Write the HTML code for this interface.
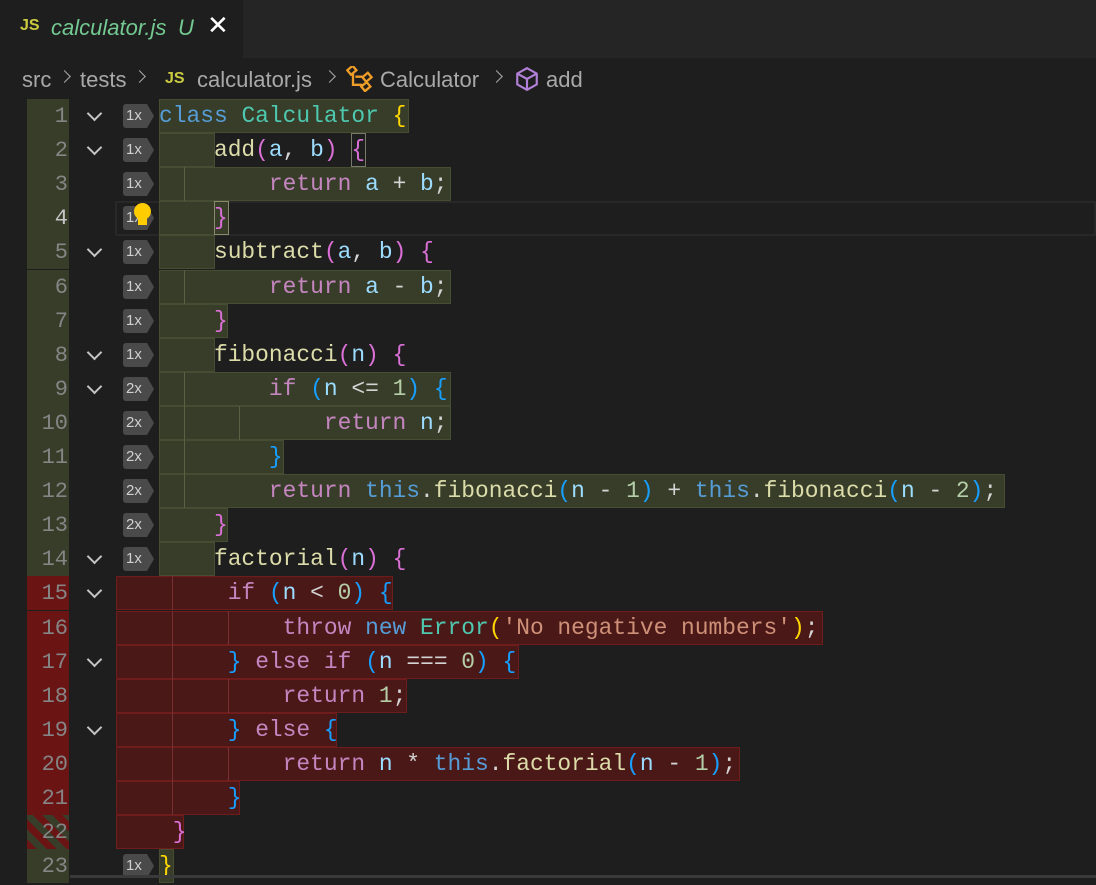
<!DOCTYPE html>
<html><head><meta charset="utf-8"><style>
*{margin:0;padding:0;box-sizing:border-box}
body{width:1096px;height:878px;background:#1e1e1e;overflow:hidden;position:relative;font-family:"Liberation Sans",sans-serif}
.tabbar{position:absolute;left:0;top:0;width:1096px;height:58px;background:#252526}
.tab{position:absolute;left:0;top:0;width:243px;height:58px;background:#1e1e1e}
.cr{position:absolute;top:67px;font-size:22px;color:#a9a9a9;white-space:nowrap}
.sep{position:absolute;top:72px;width:9px;height:9px;border-right:1.5px solid #a9a9a9;border-top:1.5px solid #a9a9a9;transform:rotate(45deg)}
.l{position:absolute;left:0;height:34px;width:1096px}
.n{position:absolute;left:27px;width:42px;height:34px;text-align:right;padding-right:1px;color:#858585;font-family:"Liberation Mono",monospace;font-size:22px;line-height:36px}
.g{background:#373d29}.r{background:#6b1414}
.b{position:absolute;height:34px}
.gb{background:#373d29;border:1px solid #454d33}
.rb{background:#4b1818;border:1px solid #6e1c1c}
.t{position:absolute;left:159px;top:0;line-height:34px;font-family:"Liberation Mono",monospace;font-size:22.9px;white-space:pre;color:#d4d4d4}
.ch{position:absolute;left:89px;top:9px;border-right:2px solid #c5c5c5;border-bottom:2px solid #c5c5c5;transform:rotate(45deg);width:11px;height:11px}
.bd{position:absolute;left:123px;top:5px;width:24px;height:24px;background:#4a4a4a;color:#d0d0d0;font-size:15px;line-height:24px;padding-left:3px;border-radius:3px 0 0 3px}
.bd:after{content:"";position:absolute;right:-7px;top:0;border-left:7px solid #4a4a4a;border-top:12px solid transparent;border-bottom:12px solid transparent}
.ig{position:absolute;top:0;width:1px;height:34px;background:#5a6040}
.igr{position:absolute;top:0;width:1px;height:34px;background:#7a3030}
.k{color:#569cd6}.c{color:#4ec9b0}.y{color:#ffd700}.f{color:#dcdcaa}.p{color:#da70d6}.v{color:#9cdcfe}.rt{color:#c586c0}.nu{color:#b5cea8}.s{color:#ce9178}.bl{color:#179fff}
</style></head><body>
<div class="tabbar"><div class="tab">
<span style="position:absolute;left:20px;top:17px;color:#cbcb41;font-weight:bold;font-size:16px">JS</span>
<span style="position:absolute;left:51px;top:15px;color:#73c991;font-style:italic;font-size:22px">calculator.js</span>
<span style="position:absolute;left:178px;top:15px;color:#73c991;font-style:italic;font-size:22px">U</span>
<span style="position:absolute;left:207px;top:10px;color:#fff;font-size:26px">✕</span>
</div></div>
<span class="cr" style="left:22px">src</span><div class="sep" style="left:60px"></div>
<span class="cr" style="left:80px">tests</span><div class="sep" style="left:135px"></div>
<b class="cr" style="left:165px;top:70px;font-size:16px;color:#cbcb41">JS</b>
<span class="cr" style="left:197px">calculator.js</span><div class="sep" style="left:325px"></div>
<svg style="position:absolute;left:346px;top:66px" width="28" height="26" viewBox="0 0 24 22"><g fill="none" stroke="#ee9d28" stroke-width="2"><rect x="2" y="1" width="6" height="5" transform="rotate(-40 5 3.5)"/><rect x="15" y="7" width="6" height="5" transform="rotate(-40 18 9.5)"/><rect x="14" y="15" width="6" height="5" transform="rotate(-40 17 17.5)"/><path d="M6 6v10h8M8 9h7"/></g></svg>
<span class="cr" style="left:380px">Calculator</span><div class="sep" style="left:492px"></div>
<svg style="position:absolute;left:514px;top:66px" width="26" height="26" viewBox="0 0 24 24"><g fill="none" stroke="#b180d7" stroke-width="2"><path d="M12 2l9 5v10l-9 5-9-5V7z"/><path d="M3 7l9 5 9-5M12 12v10"/></g></svg>
<span class="cr" style="left:546px">add</span>

<div style="position:absolute;left:115px;top:201px;width:981px;height:35px;border:2px solid #282828"></div>

<div class="l" style="top:99px"><div class="n g">1</div><div class="ch"></div><div class="bd">1x</div><div class="b gb" style="left:159px;width:250px"></div><div class="t"><span class="k">class</span> <span class="c">Calculator</span> <span class="y">{</span></div></div>
<div class="l" style="top:133.1px"><div class="n g">2</div><div class="ch"></div><div class="bd">1x</div><div class="b gb" style="left:159px;width:56px"></div><div class="b" style="left:351px;width:15px;border:1px solid #7a7a6a"></div><div class="t">    <span class="f">add</span><span class="p">(</span><span class="v">a</span>, <span class="v">b</span><span class="p">)</span> <span class="p">{</span></div></div>
<div class="l" style="top:167.2px"><div class="n g">3</div><div class="bd">1x</div><div class="b gb" style="left:159px;width:292px"></div><div class="ig" style="left:184px"></div><div class="t">        <span class="rt">return</span> <span class="v">a</span> + <span class="v">b</span>;</div></div>
<div class="l" style="top:201.3px"><div class="n g" style="color:#c6c6c6">4</div><div class="bd">1x</div><div class="b gb" style="left:159px;width:56px"></div><div class="b gb" style="left:214px;width:15px;border-color:#8a8a6a"></div><div class="t">    <span class="p">}</span></div><div style="position:absolute;left:134px;top:2px;width:17px;height:17px;border-radius:50%;background:#ffcc00"></div><div style="position:absolute;left:138px;top:16px;width:9px;height:8px;background:#ffcc00"></div></div>
<div class="l" style="top:235.4px"><div class="n g">5</div><div class="ch"></div><div class="bd">1x</div><div class="b gb" style="left:159px;width:56px"></div><div class="t">    <span class="f">subtract</span><span class="p">(</span><span class="v">a</span>, <span class="v">b</span><span class="p">)</span> <span class="p">{</span></div></div>
<div class="l" style="top:269.5px"><div class="n g">6</div><div class="bd">1x</div><div class="b gb" style="left:159px;width:292px"></div><div class="ig" style="left:184px"></div><div class="t">        <span class="rt">return</span> <span class="v">a</span> - <span class="v">b</span>;</div></div>
<div class="l" style="top:303.6px"><div class="n g">7</div><div class="bd">1x</div><div class="b gb" style="left:159px;width:69px"></div><div class="t">    <span class="p">}</span></div></div>
<div class="l" style="top:337.7px"><div class="n g">8</div><div class="ch"></div><div class="bd">1x</div><div class="b gb" style="left:159px;width:56px"></div><div class="t">    <span class="f">fibonacci</span><span class="p">(</span><span class="v">n</span><span class="p">)</span> <span class="p">{</span></div></div>
<div class="l" style="top:371.8px"><div class="n g">9</div><div class="ch"></div><div class="bd">2x</div><div class="b gb" style="left:159px;width:292px"></div><div class="ig" style="left:184px"></div><div class="t">        <span class="rt">if</span> <span class="bl">(</span><span class="v">n</span> &lt;= <span class="nu">1</span><span class="bl">)</span> <span class="bl">{</span></div></div>
<div class="l" style="top:405.9px"><div class="n g">10</div><div class="bd">2x</div><div class="b gb" style="left:159px;width:292px"></div><div class="ig" style="left:184px"></div><div class="ig" style="left:239px"></div><div class="t">            <span class="rt">return</span> <span class="v">n</span>;</div></div>
<div class="l" style="top:440px"><div class="n g">11</div><div class="bd">2x</div><div class="b gb" style="left:159px;width:125px"></div><div class="ig" style="left:184px"></div><div class="t">        <span class="bl">}</span></div></div>
<div class="l" style="top:474.1px"><div class="n g">12</div><div class="bd">2x</div><div class="b gb" style="left:159px;width:846px"></div><div class="ig" style="left:184px"></div><div class="t">        <span class="rt">return</span> <span class="k">this</span>.<span class="f">fibonacci</span><span class="bl">(</span><span class="v">n</span> - <span class="nu">1</span><span class="bl">)</span> + <span class="k">this</span>.<span class="f">fibonacci</span><span class="bl">(</span><span class="v">n</span> - <span class="nu">2</span><span class="bl">)</span>;</div></div>
<div class="l" style="top:508.2px"><div class="n g">13</div><div class="bd">2x</div><div class="b gb" style="left:159px;width:69px"></div><div class="t">    <span class="p">}</span></div></div>
<div class="l" style="top:542.3px"><div class="n g">14</div><div class="ch"></div><div class="bd">1x</div><div class="b gb" style="left:159px;width:56px"></div><div class="t">    <span class="f">factorial</span><span class="p">(</span><span class="v">n</span><span class="p">)</span> <span class="p">{</span></div></div>
<div class="l" style="top:576.4px"><div class="n r">15</div><div class="ch"></div><div class="b rb" style="left:116px;width:277px"></div><div class="igr" style="left:172px"></div><div class="t">     <span class="rt">if</span> <span class="bl">(</span><span class="v">n</span> &lt; <span class="nu">0</span><span class="bl">)</span> <span class="bl">{</span></div></div>
<div class="l" style="top:610.5px"><div class="n r">16</div><div class="b rb" style="left:116px;width:707px"></div><div class="igr" style="left:172px"></div><div class="igr" style="left:228px"></div><div class="t">         <span class="rt">throw</span> <span class="k">new</span> <span class="c">Error</span><span class="y">(</span><span class="s">'No negative numbers'</span><span class="y">)</span>;</div></div>
<div class="l" style="top:644.6px"><div class="n r">17</div><div class="ch"></div><div class="b rb" style="left:116px;width:403px"></div><div class="igr" style="left:172px"></div><div class="t">     <span class="bl">}</span> <span class="rt">else if</span> <span class="bl">(</span><span class="v">n</span> === <span class="nu">0</span><span class="bl">)</span> <span class="bl">{</span></div></div>
<div class="l" style="top:678.7px"><div class="n r">18</div><div class="b rb" style="left:116px;width:291px"></div><div class="igr" style="left:172px"></div><div class="igr" style="left:228px"></div><div class="t">         <span class="rt">return</span> <span class="nu">1</span>;</div></div>
<div class="l" style="top:712.8px"><div class="n r">19</div><div class="ch"></div><div class="b rb" style="left:116px;width:221px"></div><div class="igr" style="left:172px"></div><div class="t">     <span class="bl">}</span> <span class="rt">else</span> <span class="bl">{</span></div></div>
<div class="l" style="top:746.9px"><div class="n r">20</div><div class="b rb" style="left:116px;width:624px"></div><div class="igr" style="left:172px"></div><div class="igr" style="left:228px"></div><div class="t">         <span class="rt">return</span> <span class="v">n</span> * <span class="k">this</span>.<span class="f">factorial</span><span class="bl">(</span><span class="v">n</span> - <span class="nu">1</span><span class="bl">)</span>;</div></div>
<div class="l" style="top:781px"><div class="n r">21</div><div class="b rb" style="left:116px;width:124px"></div><div class="igr" style="left:172px"></div><div class="t">     <span class="bl">}</span></div></div>
<div class="l" style="top:815.1px"><div class="n" style="background:repeating-linear-gradient(45deg,#6b1414 0 7px,#373d29 7px 14px)">22</div><div class="b rb" style="left:116px;width:68px"></div><div class="t"> <span class="p">}</span></div></div>
<div class="l" style="top:849.2px"><div class="n g">23</div><div class="bd">1x</div><div class="b gb" style="left:159px;width:15px"></div><div class="t"><span class="y">}</span></div></div>
<div style="position:absolute;left:70px;top:875px;width:1026px;height:3px;background:#3a3a3a"></div>
</body></html>
